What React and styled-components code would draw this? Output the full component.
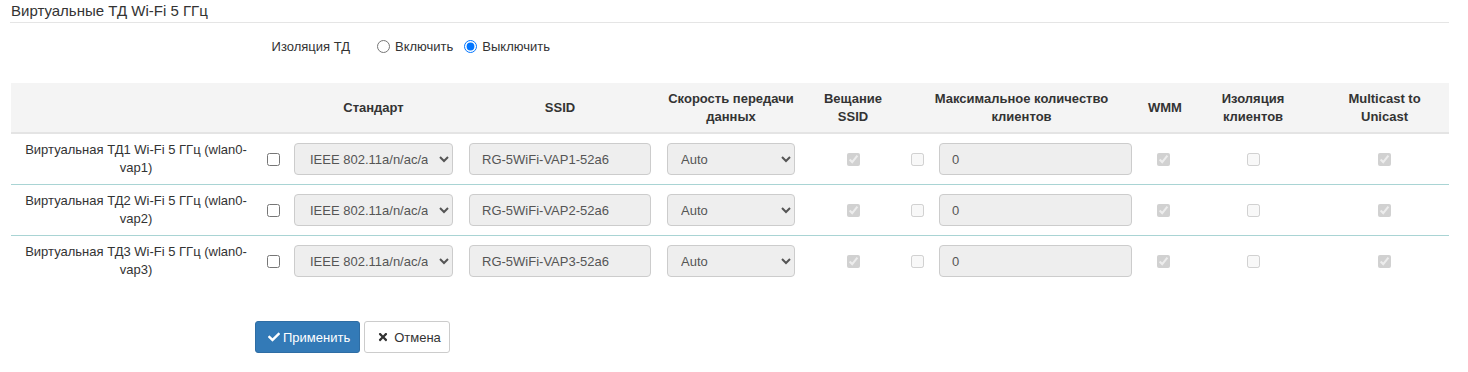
import React from 'react';
import styled, { createGlobalStyle } from 'styled-components';
import { FaCheck, FaTimes } from 'react-icons/fa';

const GlobalStyle = createGlobalStyle`
  body {
    margin: 0;
    background: #fff;
    font-family: "Liberation Sans", Arial, sans-serif;
    font-size: 13px;
    color: #333;
  }
  * { box-sizing: border-box; }
`;

const vaps = [1, 2, 3];

const cols = [250, 25, 175, 198, 144, 100, 28, 209, 46, 134, 129];

function App() {
  const [isolation, setIsolation] = React.useState('off');

  return (
    <Page>
      <GlobalStyle />
      <Legend>Виртуальные ТД Wi-Fi 5 ГГц</Legend>

      <RadioRow>
        <RadioLabel>Изоляция ТД</RadioLabel>
        <RadioGroup>
          <RadioOption>
            <input
              type="radio"
              name="iso"
              checked={isolation === 'on'}
              onChange={() => setIsolation('on')}
            />
            Включить
          </RadioOption>
          <RadioOption>
            <input
              type="radio"
              name="iso"
              checked={isolation === 'off'}
              onChange={() => setIsolation('off')}
            />
            Выключить
          </RadioOption>
        </RadioGroup>
      </RadioRow>

      <Table>
        <colgroup>
          {cols.map((w, i) => <col key={i} style={{ width: w }} />)}
        </colgroup>
        <thead>
          <tr>
            <th></th>
            <th></th>
            <th>Стандарт</th>
            <th>SSID</th>
            <th>Скорость передачи данных</th>
            <th>Вещание SSID</th>
            <th colSpan={2}>Максимальное количество клиентов</th>
            <th>WMM</th>
            <th>Изоляция клиентов</th>
            <th>Multicast to Unicast</th>
          </tr>
        </thead>
        <tbody>
          {vaps.map((n) => (
            <tr key={n}>
              <LabelCell>Виртуальная ТД{n} Wi-Fi 5 ГГц (wlan0-vap{n})</LabelCell>
              <CenterCell><input type="checkbox" /></CenterCell>
              <td>
                <Select defaultValue="ax" $pad={11}>
                  <option value="ax">IEEE 802.11a/n/ac/ax</option>
                </Select>
              </td>
              <td><Input defaultValue={`RG-5WiFi-VAP${n}-52a6`} /></td>
              <td>
                <Select defaultValue="auto" $pad={9}>
                  <option value="auto">Auto</option>
                </Select>
              </td>
              <CenterCell><input type="checkbox" checked disabled readOnly /></CenterCell>
              <CenterCell><input type="checkbox" disabled /></CenterCell>
              <td><Input defaultValue="0" /></td>
              <CenterCell><input type="checkbox" checked disabled readOnly /></CenterCell>
              <CenterCell><input type="checkbox" disabled /></CenterCell>
              <CenterCell><input type="checkbox" checked disabled readOnly /></CenterCell>
            </tr>
          ))}
        </tbody>
      </Table>

      <Actions>
        <Button $primary $left={12} $right={9}>
          <Icon $gap={3}><FaCheck size={12} /></Icon>Применить
        </Button>
        <Button $left={12} $right={8}>
          <Icon $gap={5}><FaTimes size={12} /></Icon>Отмена
        </Button>
      </Actions>
    </Page>
  );
}

const Page = styled.div`
  width: 1449px;
  padding-left: 10px;
`;

const Legend = styled.div`
  font-size: 15px;
  line-height: 22px;
  color: #333;
  border-bottom: 1px solid #e5e5e5;
  padding-left: 1px;
`;

const RadioRow = styled.div`
  display: flex;
  align-items: center;
  margin-top: 14px;
  height: 18px;
`;

const RadioLabel = styled.div`
  width: 340px;
  text-align: right;
  color: #333;
`;

const RadioGroup = styled.div`
  display: flex;
  align-items: center;
  gap: 11px;
  margin-left: 27px;
`;

const RadioOption = styled.label`
  display: flex;
  align-items: center;
  gap: 2px;
  color: #333;

  input {
    margin: 0 3px 0 0;
    width: 13px;
    height: 13px;
  }
`;

const Table = styled.table`
  margin-top: 28px;
  margin-left: 1px;
  width: 1438px;
  table-layout: fixed;
  border-collapse: separate;
  border-spacing: 0;

  th {
    background: #f4f4f4;
    font-weight: bold;
    text-align: center;
    vertical-align: middle;
    line-height: 18px;
    padding: 7px 8px 6px;
    border-bottom: 2px solid #e4e4e4;
  }

  td {
    padding: 7px 8px;
    vertical-align: middle;
    line-height: 18px;
  }

  tbody tr:not(:last-child) td {
    border-bottom: 1px solid #a9d4d4;
  }
`;

const LabelCell = styled.td`
  text-align: center;
  color: #333;
`;

const CenterCell = styled.td`
  text-align: center;
  && { padding-left: 0; padding-right: 0; }

  input {
    margin: 0;
    width: 13px;
    height: 13px;
    vertical-align: middle;
  }
`;

const fieldStyles = `
  width: 100%;
  height: 32px;
  background-color: #eee;
  border: 1px solid #ccc;
  border-radius: 4px;
  font-family: "Liberation Sans", Arial, sans-serif;
  font-size: 13px;
  color: #555;
  outline: none;
`;

const Input = styled.input`
  ${fieldStyles}
  padding: 6px 12px;
`;

const Select = styled.select`
  ${fieldStyles}
  padding: 6px 8px 6px ${(p) => p.$pad}px;
`;

const Actions = styled.div`
  display: flex;
  gap: 4px;
  margin-top: 35px;
  margin-left: 245px;
`;

const Button = styled.button`
  display: inline-flex;
  align-items: center;
  height: 32px;
  padding: 6px ${(p) => p.$right}px 6px ${(p) => p.$left}px;
  font-family: "Liberation Sans", Arial, sans-serif;
  font-size: 13px;
  border-radius: 3px;
  cursor: pointer;
  color: ${(p) => (p.$primary ? '#fff' : '#333')};
  background: ${(p) => (p.$primary ? '#337ab7' : '#fff')};
  border: 1px solid ${(p) => (p.$primary ? '#2e6da4' : '#ccc')};
`;

const Icon = styled.span`
  display: inline-flex;
  margin-right: ${(p) => p.$gap}px;
`;

export default App;
